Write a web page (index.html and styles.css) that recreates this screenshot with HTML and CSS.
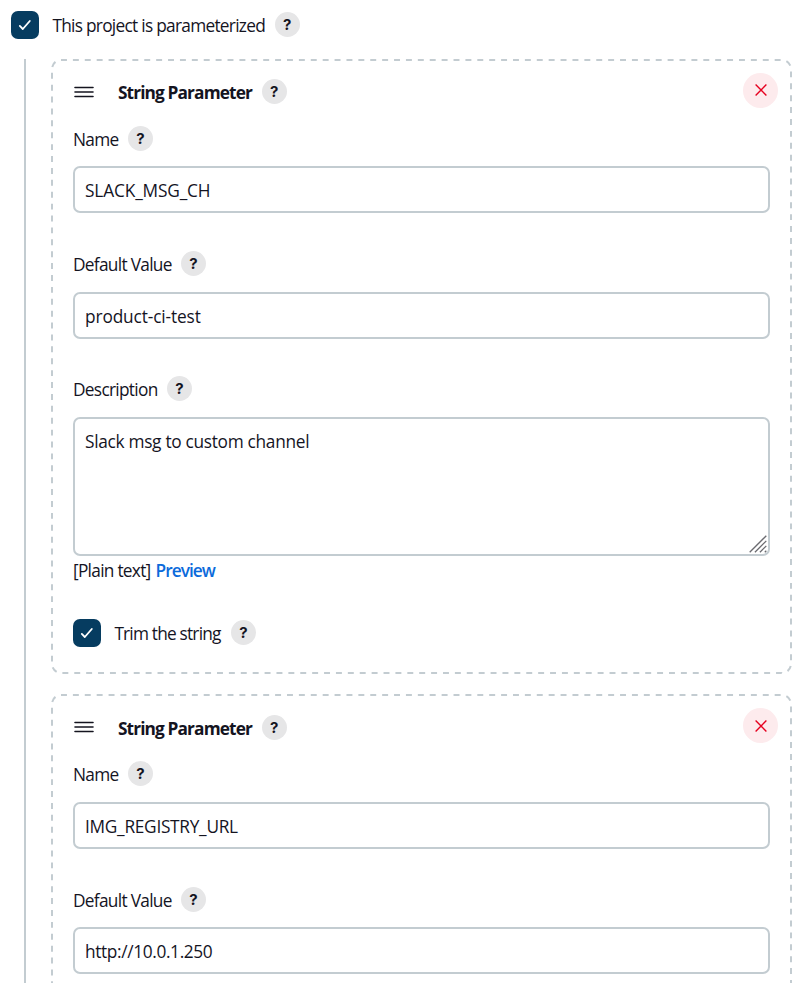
FILE: index.html
```
<!DOCTYPE html>
<html lang="en">
<head>
<meta charset="utf-8">
<title>Project parameters</title>
<link rel="stylesheet" href="styles.css">
</head>
<body>
<svg class="defs" width="0" height="0">
  <symbol id="check" viewBox="0 0 28 28"><path d="M8.8 14.9l3 3.1 7-8"/></symbol>
  <symbol id="grip" viewBox="0 0 20 12"><path d="M1 1.5h18M1 6h18M1 10.5h18"/></symbol>
  <symbol id="cross" viewBox="0 0 12 12"><path d="M.6.6l10.8 10.8M11.4.6L.6 11.4"/></symbol>
</svg>
<main class="page">
  <div class="row">
    <span class="checkbox"><svg><use href="#check"/></svg></span>
    <span class="label t-project">This project is parameterized</span><span class="help">?</span>
  </div>
  <div class="group">
    <section class="card">
      <svg class="outline"><rect x="1" y="1" width="739" height="613" rx="9" pathLength="2712"/></svg>
      <header class="card-header">
        <svg class="grip"><use href="#grip"/></svg>
        <b class="title">String Parameter</b><span class="help">?</span>
        <span class="close"><svg><use href="#cross"/></svg></span>
      </header>
      <div class="field">
        <div class="row"><span class="label t-name">Name</span><span class="help">?</span></div>
        <div class="input"><span class="t-slack">SLACK_MSG_CH</span></div>
      </div>
      <div class="field">
        <div class="row"><span class="label t-default">Default Value</span><span class="help">?</span></div>
        <div class="input"><span class="t-product">product-ci-test</span></div>
      </div>
      <div class="field">
        <div class="row"><span class="label t-desc">Description</span><span class="help">?</span></div>
        <div class="input textarea"><span class="t-msg">Slack msg to custom channel</span>
          <svg class="resize" viewBox="0 0 18 18"><path d="M.7 17.3L17.3.7M5.9 17.3L17.3 5.9M10.9 17.3l6.4-6.4M15.8 17.3l1.5-1.5"/></svg>
        </div>
      </div>
      <div class="format"><span class="t-plain">[Plain text]</span><a class="preview">Preview</a></div>
      <div class="row trim">
        <span class="checkbox"><svg><use href="#check"/></svg></span>
        <span class="label t-trim">Trim the string</span><span class="help">?</span>
      </div>
    </section>
    <section class="card">
      <svg class="outline"><rect x="1" y="1" width="739" height="613" rx="9" pathLength="2712"/></svg>
      <header class="card-header">
        <svg class="grip"><use href="#grip"/></svg>
        <b class="title">String Parameter</b><span class="help">?</span>
        <span class="close"><svg><use href="#cross"/></svg></span>
      </header>
      <div class="field">
        <div class="row"><span class="label t-name">Name</span><span class="help">?</span></div>
        <div class="input"><span class="t-img">IMG_REGISTRY_URL</span></div>
      </div>
      <div class="field">
        <div class="row"><span class="label t-default">Default Value</span><span class="help">?</span></div>
        <div class="input"><span class="t-http">http://10.0.1.250</span></div>
      </div>
    </section>
  </div>
</main>
</body>
</html>
```
FILE: styles.css
```
* { box-sizing: border-box; }
body {
  margin: 0;
  background: #fff;
  color: #14141f;
  font: 17.3px/25px "Open Sans", "Noto Sans", sans-serif;
}
.defs { position: absolute; }
svg { fill: none; stroke: currentColor; }
.page {
  height: 983px;
  overflow: hidden;
  padding: 11px 12px 0 11px;
}
.row, .card-header, .format { display: flex; align-items: center; white-space: nowrap; }
.row { height: 25px; }
.page > .row { height: 28px; }
.checkbox {
  flex: none;
  width: 28px;
  height: 28px;
  margin-right: 13.4px;
  border-radius: 7px;
  background: #063c60;
  color: #fff;
}
.checkbox svg { display: block; width: 28px; height: 28px; stroke-width: 1.8; stroke-linecap: round; stroke-linejoin: round; }
.help {
  flex: none;
  width: 25px;
  height: 25px;
  margin-left: 9px;
  border-radius: 50%;
  background: #e6e6e7;
  font: 700 15px/25px Inter, sans-serif;
  text-align: center;
}
.page > .row .help { margin: -1px 0 0 9.6px; }
.group {
  margin: 19.6px 0 0 13px;
  padding-left: 25px;
  border-left: 2px solid #c3ccd1;
}
.card {
  position: relative;
  height: 615.4px;
  margin-bottom: 20.2px;
  padding: 20.6px 22px 0;
}
.outline {
  position: absolute;
  top: 0;
  left: 0;
  width: 741px;
  height: 615px;
  color: #c3ccd1;
  stroke-width: 2;
  stroke-dasharray: 6 6;
}
.card-header { height: 25px; }
.grip { width: 20px; height: 12px; margin: 0 23.6px 0 1.4px; stroke-width: 1.6; stroke-linecap: round; }
.title { width: 135px; padding-top: 2px; letter-spacing: -.88px; }
.card-header .help { margin-left: 8.6px; }
.close {
  display: grid;
  place-items: center;
  width: 35px;
  height: 35px;
  margin: -3px -8px 0 auto;
  border-radius: 50%;
  background: #fdebed;
  color: #e6001f;
}
.close svg { width: 12px; height: 12px; stroke-width: 1.4; }
.field { margin-top: 21.4px; }
.field + .field { margin-top: 37.7px; }
.input {
  position: relative;
  height: 46.9px;
  margin-top: 15.8px;
  padding: 10px 10px 0;
  border: 2px solid #c3ccd1;
  border-radius: 7px;
  white-space: nowrap;
}
.textarea { height: 139px; }
.resize { position: absolute; right: 1px; bottom: 1px; width: 18px; height: 18px; color: #6b6b70; stroke-width: 1.3; }
.format { height: 25px; margin-top: 1.5px; gap: 4px; }
.preview { color: #0b6adb; font-weight: 600; letter-spacing: -.95px; }
.trim { height: 28px; margin-top: 36.3px; }
.label { padding-top: 2px; letter-spacing: -.7px; }
.t-project { width: 212.6px; padding-top: 0; letter-spacing: -.72px; }
.t-name { width: 46px; }
.t-default { width: 99px; }
.t-desc { width: 85px; }
.t-plain { width: 78.5px; letter-spacing: -.72px; }
.t-trim { width: 107.6px; letter-spacing: -.8px; }
.t-slack { letter-spacing: -.15px; }
.t-product { letter-spacing: -.13px; }
.t-msg { letter-spacing: -.3px; }
.t-img { letter-spacing: -.28px; }
.t-http { letter-spacing: -.36px; }
```
